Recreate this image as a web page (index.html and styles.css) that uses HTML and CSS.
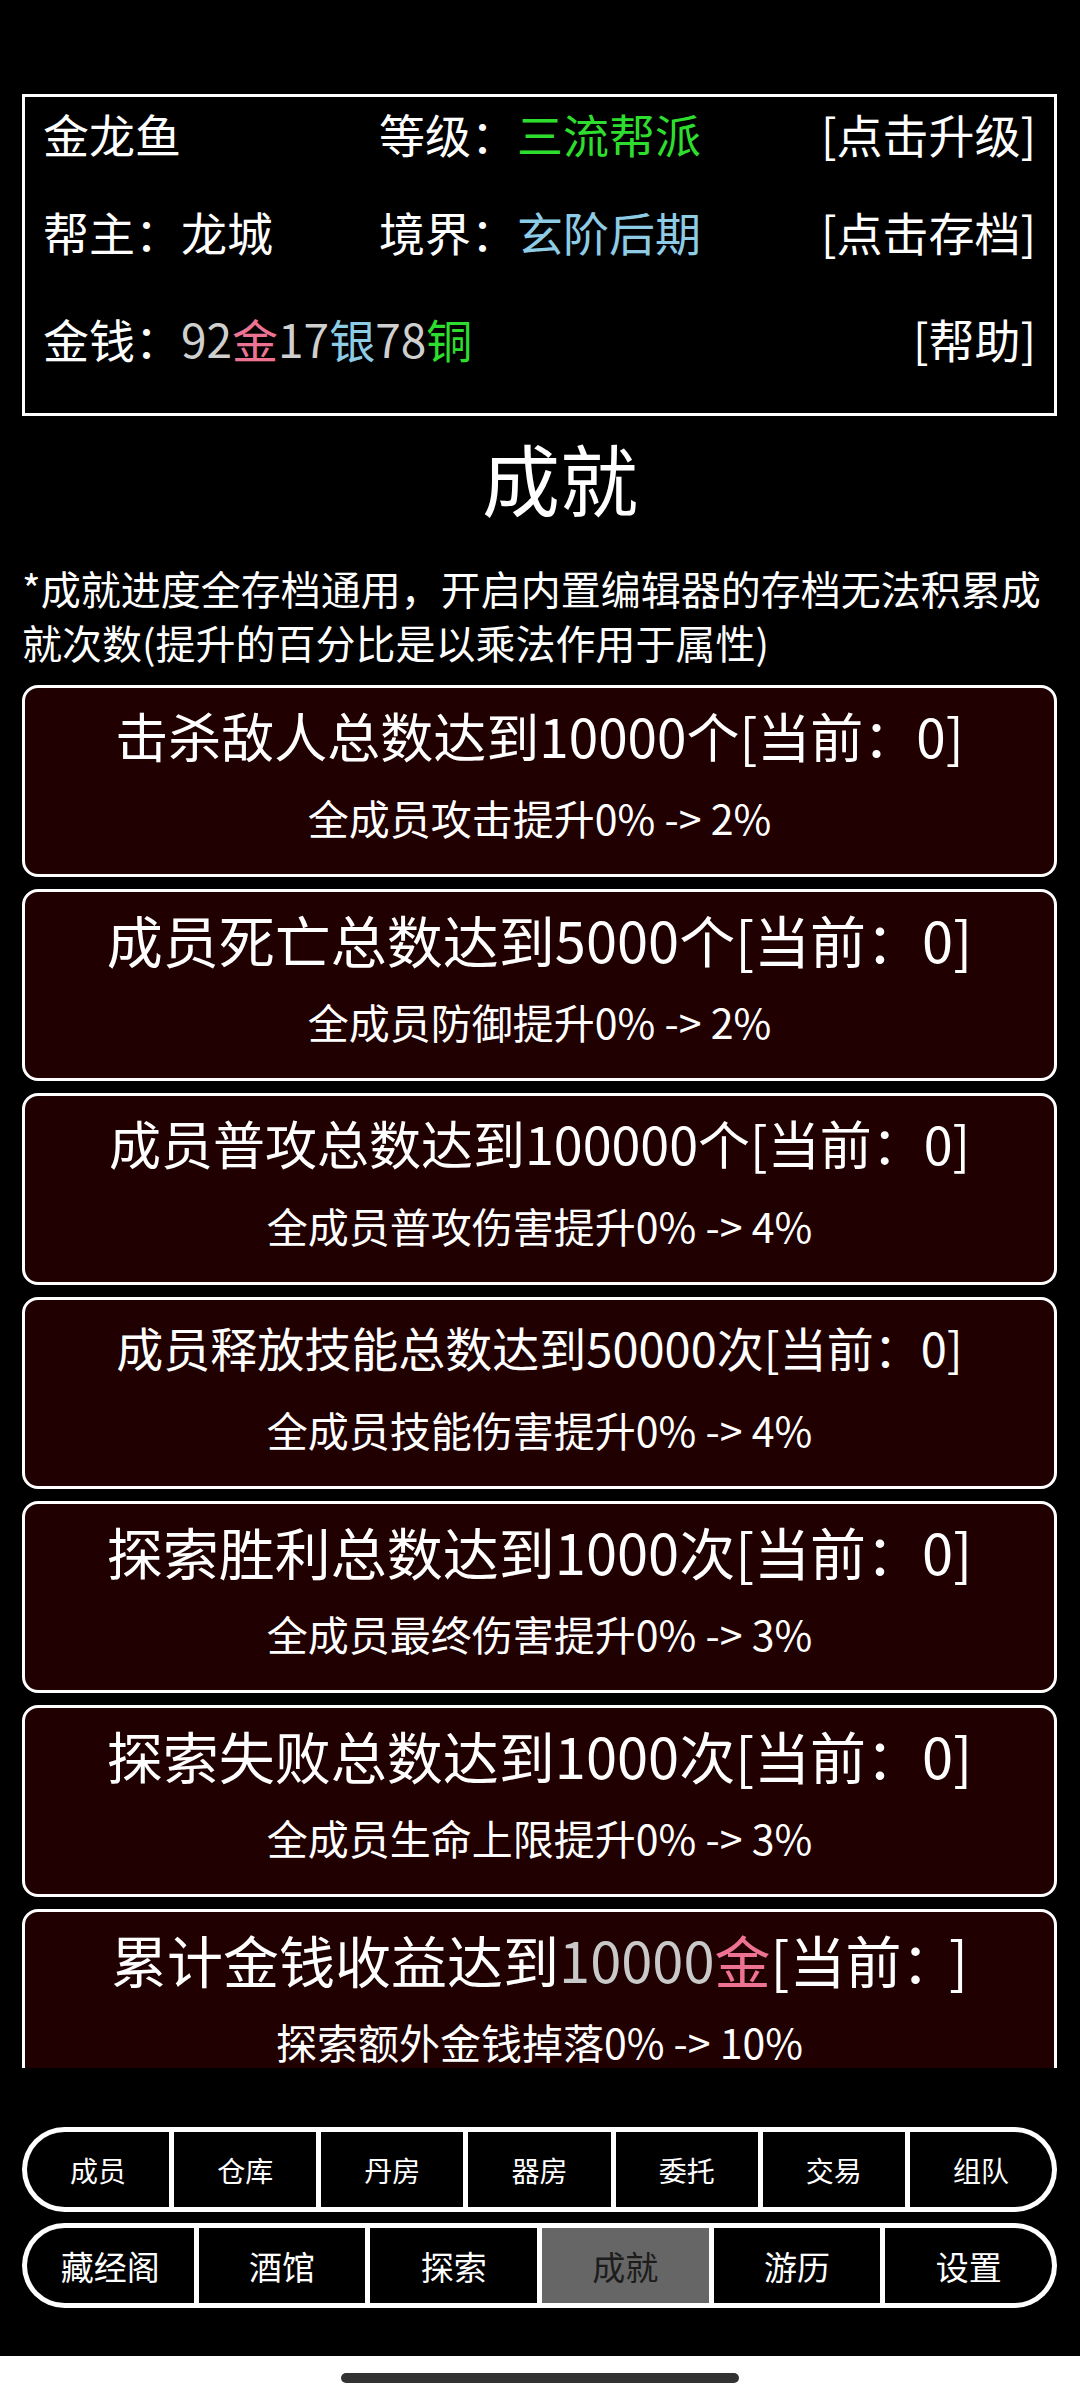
FILE: index.html
```html
<!DOCTYPE html>
<html lang="zh-CN">
<head>
<meta charset="utf-8">
<title>成就</title>
<link rel="stylesheet" href="styles.css">
</head>
<body>
<div class="page">
  <div class="status"></div>

  <section class="header">
    <div class="hrow r1">
      <span class="c1">金龙鱼</span>
      <span class="c2">等级：<span class="green">三流帮派</span></span>
      <span class="c3">[点击升级]</span>
    </div>
    <div class="hrow r2">
      <span class="c1">帮主：龙城</span>
      <span class="c2">境界：<span class="blue">玄阶后期</span></span>
      <span class="c3">[点击存档]</span>
    </div>
    <div class="hrow r3">
      <span class="c12">金钱：<span class="gray">92</span><span class="pink">金</span><span class="gray">17</span><span class="blue">银</span><span class="gray">78</span><span class="green">铜</span></span>
      <span class="c3">[帮助]</span>
    </div>
  </section>

  <h1 class="title">成就</h1>

  <p class="note">*成就进度全存档通用，开启内置编辑器的存档无法积累成就次数(提升的百分比是以乘法作用于属性)</p>

  <div class="list">
    <div class="card">
      <div class="ctitle t1">击杀敌人总数达到10000个[当前：0]</div>
      <div class="csub">全成员攻击提升0% -&gt; 2%</div>
    </div>
    <div class="card">
      <div class="ctitle t2">成员死亡总数达到5000个[当前：0]</div>
      <div class="csub">全成员防御提升0% -&gt; 2%</div>
    </div>
    <div class="card">
      <div class="ctitle t3">成员普攻总数达到100000个[当前：0]</div>
      <div class="csub">全成员普攻伤害提升0% -&gt; 4%</div>
    </div>
    <div class="card">
      <div class="ctitle t4">成员释放技能总数达到50000次[当前：0]</div>
      <div class="csub">全成员技能伤害提升0% -&gt; 4%</div>
    </div>
    <div class="card">
      <div class="ctitle t5">探索胜利总数达到1000次[当前：0]</div>
      <div class="csub">全成员最终伤害提升0% -&gt; 3%</div>
    </div>
    <div class="card">
      <div class="ctitle t5">探索失败总数达到1000次[当前：0]</div>
      <div class="csub">全成员生命上限提升0% -&gt; 3%</div>
    </div>
    <div class="card">
      <div class="ctitle t5">累计金钱收益达到<span class="silver">10000</span><span class="pink">金</span>[当前<span class="colon">：</span>]</div>
      <div class="csub">探索额外金钱掉落0% -&gt; 10%</div>
    </div>
  </div>

  <nav class="nav">
    <div class="pill small">
      <div class="cell">成员</div>
      <div class="cell">仓库</div>
      <div class="cell">丹房</div>
      <div class="cell">器房</div>
      <div class="cell">委托</div>
      <div class="cell">交易</div>
      <div class="cell">组队</div>
    </div>
    <div class="pill big">
      <div class="cell">藏经阁</div>
      <div class="cell">酒馆</div>
      <div class="cell">探索</div>
      <div class="cell active">成就</div>
      <div class="cell">游历</div>
      <div class="cell">设置</div>
    </div>
  </nav>

  <div class="sysbar"><div class="handle"></div></div>
</div>
</body>
</html>
```
FILE: styles.css
```css
* { box-sizing: border-box; }
html, body {
  margin: 0;
  padding: 0;
  background: #000;
}
body {
  width: 1080px;
  height: 2400px;
  overflow: hidden;
  font-family: "Noto Sans CJK SC", "Noto Sans", sans-serif;
  color: #fff;
}
.page {
  height: 2400px;
  display: flex;
  flex-direction: column;
}
.status { height: 94px; flex: none; }

.header {
  margin: 0 23px 0 22px;
  height: 322px;
  border: 3px solid #fff;
  padding: 6px 18px 0 18px;
  font-size: 46px;
  flex: none;
}
.hrow {
  display: grid;
  grid-template-columns: 336px 1fr auto;
  height: 60px;
  line-height: 60px;
  white-space: nowrap;
}
.r2 { margin-top: 38px; }
.r3 { margin-top: 47px; }
.c12 { grid-column: 1 / 3; }
.c3 { text-align: right; }

.green { color: #2ede2e; }
.blue { color: #8ecbe4; }
.gray { color: #cfcfcf; }
.pink { color: #ee7393; }
.silver { color: #c9c9c9; }

.title {
  margin: 11px 0 0;
  padding-left: 40px;
  height: 100px;
  line-height: 100px;
  text-align: center;
  font-size: 78px;
  font-weight: 400;
}
.note {
  margin: 34px 0 0;
  padding: 0 20px 0 22px;
  font-size: 40px;
  line-height: 54px;
}

.list {
  margin-top: 16px;
  height: 1383px;
  overflow: hidden;
  flex: none;
  padding: 0 23px 0 22px;
  display: flex;
  flex-direction: column;
  gap: 12px;
}
.card {
  flex: none;
  height: 192px;
  border: 3px solid #fff;
  border-radius: 16px;
  background: #200000;
  text-align: center;
  padding-top: 12px;
}
.ctitle {
  height: 70px;
  line-height: 70px;
  white-space: nowrap;
}
.t1 { font-size: 53px; }
.t2 { font-size: 56px; }
.t3 { font-size: 52px; }
.t4 { font-size: 47px; }
.t5 { font-size: 56px; }
.colon { margin-right: 0.35em; }
.csub {
  margin-top: 22px;
  height: 50px;
  line-height: 50px;
  font-size: 41px;
  white-space: nowrap;
}

.nav {
  margin-top: 59px;
  padding: 0 23px 0 22px;
  display: flex;
  flex-direction: column;
  gap: 11px;
  flex: none;
}
.pill {
  height: 85px;
  background: #fff;
  border-radius: 43px;
  padding: 5px;
  display: flex;
  gap: 5px;
}
.cell {
  flex: 1 1 0;
  background: #000;
  display: flex;
  align-items: center;
  justify-content: center;
  white-space: nowrap;
}
.cell:first-child { border-radius: 38px 0 0 38px; }
.cell:last-child { border-radius: 0 38px 38px 0; }
.small .cell { font-size: 28px; }
.big .cell { font-size: 33px; }
.cell.active { background: #666; color: #1c1c1c; }

.sysbar {
  margin-top: auto;
  height: 44px;
  background: #fff;
  flex: none;
  padding-top: 17px;
}
.handle {
  width: 398px;
  height: 10px;
  margin: 0 auto;
  border-radius: 5px;
  background: #333;
}
```
